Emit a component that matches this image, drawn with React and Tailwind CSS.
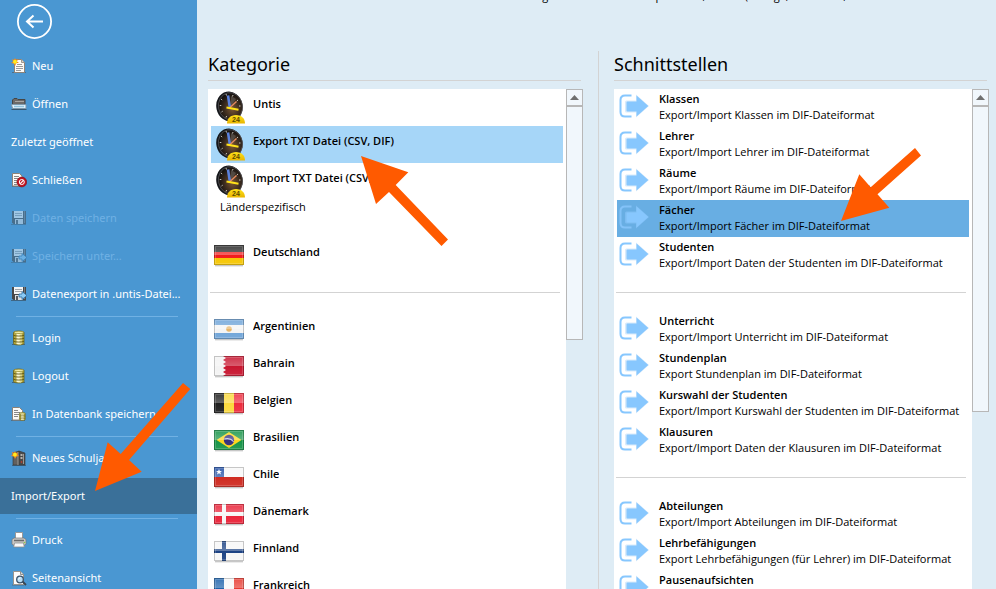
import React from "react";
import clsx from "clsx";

/* ---------- sidebar icons, 16 x 16 ---------- */

function Icon({ children, dim }) {
  return (
    <svg viewBox="0 0 16 16" className={clsx("size-4 shrink-0", dim && "opacity-50")} aria-hidden="true">
      {children}
    </svg>
  );
}

const IconNew = () => (
  <Icon>
    <path d="M1 14.500h14" stroke="#4b6f8c" />
    <path d="M3.500 1.500h7l3 3v10h-10z" fill="#fdfbf7" stroke="#8d8378" />
    <path d="M10.500 1.500v3h3" fill="#dcd6cc" stroke="#8d8378" strokeWidth=".8" />
    <path d="M6 6.500h5M5 8.500h7M5 10.500h7M5 12.500h5" stroke="#9b9b9b" />
    <path d="M4 0l1 2 2-1-1 2.500L8 5 5.500 5 4 8 3 5.500 0 5l2-1.500L1 1l2 1z" fill="#f28a1c" />
    <circle cx="4" cy="3.800" r="2" fill="#ffec1f" />
  </Icon>
);

const IconOpen = () => (
  <Icon>
    <path d="M.5 13.500h15" stroke="#37566e" />
    <path d="M1.500 12V4l1.500-1.500h3l1 1h7V12z" fill="#6c6a68" stroke="#454545" />
    <path d="M4 5.500h9" stroke="#a8a5a0" />
    <path d="M.5 8.500h14.500v4H1.500z" fill="#dff0fa" stroke="#7d98aa" />
    <path d="M3 10.500h10" stroke="#8fc3dc" strokeWidth="1.500" />
  </Icon>
);

const IconClose = () => (
  <Icon>
    <path d="M1 14.500h10" stroke="#4b6f8c" />
    <path d="M1.500 1.500h7l2.500 2.500v10h-9.500z" fill="#fdfbf7" stroke="#8d8378" />
    <path d="M3 4.500h5M3 6.500h5M3 8.500h3M3 10.500h3M3 12.500h3" stroke="#888" />
    <circle cx="10.800" cy="10" r="4.900" fill="#c31420" stroke="#7f0c14" strokeWidth=".6" />
    <circle cx="10.800" cy="10" r="2.500" fill="none" stroke="#fff" strokeWidth="1" />
    <path d="M9 11.800l3.600-3.600" stroke="#fff" strokeWidth="1.200" />
  </Icon>
);

const Disk = () => (
  <>
    <path d="M0 14.500h15" stroke="#3f6684" />
    <path d="M1 1h14v13H2.500L1 12.500z" fill="#464749" />
    <path d="M3 1h9v7H3z" fill="#f4f5f6" />
    <path d="M4 3.500h7M4 5.500h7" stroke="#a3a7ab" />
    <path d="M4 9h8v5H4z" fill="#dcdfe2" />
    <path d="M5 10h2v4H5z" fill="#55585c" />
    <path d="M13.500 1v12" stroke="#74777a" />
  </>
);

const IconSave = () => (
  <Icon dim>
    <Disk />
  </Icon>
);

const IconSaveAs = ({ dim }) => (
  <Icon dim={dim}>
    <Disk />
    <path d="M8 8h3V5.500L16 9.500 11 13.500V11H8z" fill="#8ccaf4" stroke="#2c6da3" strokeWidth=".8" />
  </Icon>
);

const Barrel = () => (
  <>
    <path d="M2.500 2.500C2.500.6 13 .6 13 2.500v11c0 1.900-10.500 1.900-10.500 0z" fill="#b3a63d" stroke="#6c6418" strokeWidth=".8" />
    <path d="M5.500 3.500c1.500.5 3.500.5 5 0v10.500c-1.500.5-3.500.5-5 0z" fill="#fbf8d2" />
    <path d="M9.500 4v10.500" stroke="#e3dc92" strokeWidth="1.500" />
    <path d="M2.500 5.300c2 1 8.500 1 10.500 0M2.500 8.300c2 1 8.500 1 10.500 0M2.500 11.300c2 1 8.500 1 10.500 0" fill="none" stroke="#5e5718" strokeWidth=".9" />
    <ellipse cx="7.800" cy="2.400" rx="4.600" ry="1.100" fill="#f3eea8" stroke="#817823" strokeWidth=".5" />
  </>
);

const IconDb = () => (
  <Icon>
    <path d="M1 14.500h13" stroke="#3f6684" />
    <Barrel />
  </Icon>
);

const IconSaveDb = () => (
  <Icon>
    <path d="M0 14.500h14" stroke="#4b6f8c" />
    <path d="M1.500 1.500h7l3 3v9.500h-10z" fill="#fdfbf7" stroke="#8d8378" />
    <path d="M3 4.500h4M3 6.500h6M3 8.500h5M3 10.500h4" stroke="#888" />
    <svg x="7" y="6" width="9" height="9" viewBox="2 0 12 16">
      <Barrel />
    </svg>
  </Icon>
);

const IconYear = () => (
  <Icon>
    <path d="M1 15.500h14" stroke="#3f6684" />
    <path d="M2 3l6-2v14H2z" fill="#62605e" stroke="#333" strokeWidth=".6" />
    <path d="M8 1l6 2v12H8z" fill="#4b4a49" stroke="#333" strokeWidth=".6" />
    <path d="M7 2v13M12.500 4v10" stroke="#9b9894" />
    <path d="M9.500 5h2M9.500 8h2" stroke="#d8d5cf" strokeWidth="1.500" />
    <path d="M4 1l1 2 2-.5-.5 2L8 6 5.500 6.500 4 9 3 6.500 0 6l1.500-1.500L1 2l2 .7z" fill="#f28a1c" />
    <circle cx="3.900" cy="4.700" r="1.900" fill="#ffec1f" />
    <circle cx="10.500" cy="12" r=".8" fill="#e33c25" />
  </Icon>
);

const IconPrint = () => (
  <Icon>
    <path d="M4.500.5h7v6h-7z" fill="#fff" stroke="#999" />
    <path d="M1 7.500L3 6h10l2 1.500V12l-1 1H2l-1-1z" fill="#c9c8c5" stroke="#777" strokeWidth=".7" />
    <path d="M3 8.500h10" stroke="#6b6b6b" strokeWidth="1.500" />
    <path d="M3.500 11h9l.8 4H2.700z" fill="#fafafa" stroke="#8d8d8d" strokeWidth=".8" />
    <circle cx="13.500" cy="10.500" r=".8" fill="#8bd045" />
  </Icon>
);

const IconPreview = () => (
  <Icon>
    <path d="M1 15h12" stroke="#4b6f8c" />
    <path d="M2.500 1.500h7l3 3v10h-10z" fill="#fdfdfd" stroke="#9a948c" />
    <path d="M9.500 1.500v3h3" fill="#ddd" stroke="#777" strokeWidth=".8" />
    <path d="M11.500 11.500l3.500 3.500" stroke="#3c4650" strokeWidth="1.800" />
    <circle cx="9" cy="9.500" r="3.300" fill="#b9def5" stroke="#39516a" strokeWidth="1.300" />
    <path d="M7.500 9.500a2 2 0 0 1 2-1.700" fill="none" stroke="#fff" />
  </Icon>
);

/* ---------- list icons ---------- */

const Clock = () => (
  <svg viewBox="0 0 29 33" className="h-[33px] w-[29px]" aria-hidden="true">
    <defs>
      <radialGradient id="face" cx=".55" cy=".6" r=".6">
        <stop offset="0" stopColor="#7a5632" />
        <stop offset=".55" stopColor="#3b2b1e" />
        <stop offset="1" stopColor="#0e0d0d" />
      </radialGradient>
      <linearGradient id="badge" x1="0" y1="0" x2="0" y2="1">
        <stop offset="0" stopColor="#ffe21a" />
        <stop offset="1" stopColor="#e9b500" />
      </linearGradient>
    </defs>
    <ellipse cx="13.500" cy="15.500" rx="13.200" ry="15" transform="rotate(-12 13.500 15.500)" fill="#15171b" />
    <ellipse cx="14.500" cy="15.500" rx="12" ry="13.800" transform="rotate(-12 14 15.500)" fill="url(#face)" stroke="#77757a" strokeWidth=".5" />
    <path d="M10 3l.5 1.500M5 8l1.200 1M3.800 14.500h1.500M5.500 21l1.200-.8M10 26.500l.6-1.500M17 4l-.5 1.500M22 9l-1.200 1M24.500 15h-1.500" stroke="#c9c5bd" strokeWidth="1" />
    <path d="M15 5l5 3-5 7z" fill="#5b5753" opacity=".7" />
    <path d="M12 4.500l1.800 11.500" stroke="#5b82de" strokeWidth="2.600" />
    <path d="M13.500 17l7-6.500" stroke="#e58b62" strokeWidth="1.400" />
    <path d="M10.500 16.500l12 2.300" stroke="#ffe21a" strokeWidth="2" />
    <path d="M11 32.500c0-5 3.500-8.500 9-8.500s9 3.500 9 8.500z" fill="url(#badge)" />
    <text x="20" y="31" textAnchor="middle" fontSize="7" fontWeight="700" fill="#5b4b00" fontFamily="Liberation Sans, Arial, sans-serif">
      24
    </text>
  </svg>
);

const flagArt = {
  de: (
    <>
      <path fill="#2b2b2b" d="M0 0h30v7H0z" />
      <path fill="#f11b1b" d="M0 7h30v6H0z" />
      <path fill="#f6c600" d="M0 13h30v7H0z" />
    </>
  ),
  ar: (
    <>
      <path fill="#6fa4d8" d="M0 0h30v20H0z" />
      <path fill="#f4f4f4" d="M0 6h30v8H0z" />
      <circle cx="15" cy="10" r="2.800" fill="#e8b568" />
    </>
  ),
  bh: (
    <>
      <path fill="#c8152f" d="M0 0h30v20H0z" />
      <path fill="#f3f3f3" d="M0 0h9l3 2-3 2 3 2-3 2 3 2-3 2 3 2-3 2 3 2-3 2H0z" />
    </>
  ),
  be: (
    <>
      <path fill="#1e1e1e" d="M0 0h10v20H0z" />
      <path fill="#fbd93c" d="M10 0h10v20H10z" />
      <path fill="#ee2b3d" d="M20 0h10v20H20z" />
    </>
  ),
  br: (
    <>
      <path fill="#159447" d="M0 0h30v20H0z" />
      <path fill="#fbd51d" d="M15 2l12.500 8L15 18 2.500 10z" />
      <circle cx="15" cy="10" r="5.200" fill="#352f7e" />
      <path d="M10.300 9c3-1 7 0 9.400 2.600" fill="none" stroke="#c9cbe8" strokeWidth="1.200" />
    </>
  ),
  cl: (
    <>
      <path fill="#f7f7f7" d="M0 0h30v10H0z" />
      <path fill="#cf2a20" d="M0 10h30v10H0z" />
      <path fill="#1f4da4" d="M0 0h10v10H0z" />
      <path fill="#fff" d="M5 2l.8 2h2.200L6.300 5.300 7 7.500 5 6.200 3 7.500l.7-2.200L2 4h2.200z" />
    </>
  ),
  dk: (
    <>
      <path fill="#ea2137" d="M0 0h30v20H0z" />
      <path fill="#f6f6f6" d="M8 0h4v20H8zM0 8h30v4H0z" />
    </>
  ),
  fi: (
    <>
      <path fill="#f7f7f7" d="M0 0h30v20H0z" />
      <path fill="#1c4284" d="M8 0h4v20H8zM0 8h30v4H0z" />
    </>
  ),
  fr: (
    <>
      <path fill="#1d62ab" d="M0 0h10v20H0z" />
      <path fill="#f7f7f7" d="M10 0h10v20H10z" />
      <path fill="#e8392f" d="M20 0h10v20H20z" />
    </>
  ),
};

function Flag({ code }) {
  return (
    <svg viewBox="0 0 30 22" className="h-[22px] w-[30px]" aria-hidden="true">
      <defs>
        <linearGradient id="gloss" x1="0" y1="0" x2="0" y2="1">
          <stop offset="0" stopColor="#fff" stopOpacity=".12" />
          <stop offset=".48" stopColor="#fff" stopOpacity=".3" />
          <stop offset=".5" stopColor="#fff" stopOpacity="0" />
          <stop offset="1" stopColor="#fff" stopOpacity=".08" />
        </linearGradient>
      </defs>
      <path d="M1 20.500h28" stroke="#000" strokeOpacity=".22" />
      <path d="M1 21.500h28" stroke="#000" strokeOpacity=".08" />
      {flagArt[code]}
      <path fill="url(#gloss)" d="M0 0h30v20H0z" />
      <rect x=".5" y=".5" width="29" height="19" fill="none" stroke="#000" strokeOpacity=".2" />
      <rect x="1.500" y="1.500" width="27" height="17" fill="none" stroke="#fff" strokeOpacity=".18" />
    </svg>
  );
}

const ExportArrow = ({ selected }) => (
  <svg viewBox="0 0 30 24" className="h-6 w-[30px]" aria-hidden="true">
    <path
      d="M12.500 1.500H6Q1.500 1.500 1.500 6v12q0 4.500 4.500 4.500h6.500"
      fill="none"
      stroke={selected ? "#83c2f8" : "#87c7fe"}
      strokeWidth="2"
    />
    <path
      d="M7.500 6.500h9.500V.5L30 12 17 23.500v-5H7.500q-1.500 0-1.500-1.500V8q0-1.500 1.500-1.500z"
      fill={selected ? "#7dbcf1" : "#d9ebfb"}
    />
    <path d="M8.500 7.500h9V1.500L29.300 12 17.500 22.500v-5H8.500q-1 0-1-1v-8q0-1 1-1z" fill="#87c7fe" />
  </svg>
);

/* ---------- data ---------- */

const menu = [
  { label: "Neu", icon: <IconNew /> },
  { label: "Öffnen", icon: <IconOpen /> },
  { label: "Zuletzt geöffnet" },
  { label: "Schließen", icon: <IconClose /> },
  { label: "Daten speichern", icon: <IconSave />, disabled: true },
  { label: "Speichern unter...", icon: <IconSaveAs dim />, disabled: true },
  { label: "Datenexport in .untis-Datei...", icon: <IconSaveAs /> },
  null,
  { label: "Login", icon: <IconDb /> },
  { label: "Logout", icon: <IconDb /> },
  { label: "In Datenbank speichern", icon: <IconSaveDb /> },
  null,
  { label: "Neues Schuljahr", icon: <IconYear /> },
  { label: "Import/Export", active: true },
  null,
  { label: "Druck", icon: <IconPrint /> },
  { label: "Seitenansicht", icon: <IconPreview /> },
];

const categories = [
  { title: "Untis", clock: true },
  { title: "Export TXT Datei (CSV, DIF)", clock: true, selected: true },
  { title: "Import TXT Datei (CSV, DIF)", clock: true },
  { group: "Länderspezifisch" },
  { title: "Deutschland", flag: "de" },
  null,
  { title: "Argentinien", flag: "ar" },
  { title: "Bahrain", flag: "bh" },
  { title: "Belgien", flag: "be" },
  { title: "Brasilien", flag: "br" },
  { title: "Chile", flag: "cl" },
  { title: "Dänemark", flag: "dk" },
  { title: "Finnland", flag: "fi" },
  { title: "Frankreich", flag: "fr" },
];

const interfaces = [
  { title: "Klassen", text: "Export/Import Klassen im DIF-Dateiformat" },
  { title: "Lehrer", text: "Export/Import Lehrer im DIF-Dateiformat" },
  { title: "Räume", text: "Export/Import Räume im DIF-Dateiformat" },
  { title: "Fächer", text: "Export/Import Fächer im DIF-Dateiformat", selected: true },
  { title: "Studenten", text: "Export/Import Daten der Studenten im DIF-Dateiformat" },
  null,
  { title: "Unterricht", text: "Export/Import Unterricht im DIF-Dateiformat" },
  { title: "Stundenplan", text: "Export Stundenplan im DIF-Dateiformat" },
  { title: "Kurswahl der Studenten", text: "Export/Import Kurswahl der Studenten im DIF-Dateiformat" },
  { title: "Klausuren", text: "Export/Import Daten der Klausuren im DIF-Dateiformat" },
  null,
  { title: "Abteilungen", text: "Export/Import Abteilungen im DIF-Dateiformat" },
  { title: "Lehrbefähigungen", text: "Export Lehrbefähigungen (für Lehrer) im DIF-Dateiformat" },
  { title: "Pausenaufsichten", text: "Export/Import Pausenaufsichten im DIF-Dateiformat" },
];

/* ---------- layout parts ---------- */

function Sidebar() {
  return (
    <nav className="w-[197px] shrink-0 bg-[#4a97d2] font-['Noto_Sans','Open_Sans',sans-serif] text-white">
      <div className="h-[47px] pt-1 pl-4">
        <button type="button" aria-label="Zurück" className="block size-9">
          <svg viewBox="0 0 36 36" className="size-9" fill="none" stroke="#fff" strokeWidth="1.800">
            <circle cx="18.500" cy="17.500" r="16.600" />
            <path d="M27 17.500H11M17.500 11.500l-6.500 6 6.500 6" strokeWidth="2" />
          </svg>
        </button>
      </div>
      <ul>
        {menu.map((item, i) =>
          item ? (
            <li key={i} className="py-px">
              <button
                type="button"
                disabled={item.disabled}
                className={clsx(
                  "flex h-9 w-full items-center gap-[5px] pl-[11px] text-left whitespace-nowrap",
                  item.active && "bg-[#3a7099]",
                  item.disabled && "text-[#70b1e4]"
                )}
              >
                {item.icon}
                {item.label}
              </button>
            </li>
          ) : (
            <li key={i} role="separator" className="h-1.5 pt-[3px] pr-[19px] pl-4">
              <div className="h-px bg-[#70b1e4]" />
            </li>
          )
        )}
      </ul>
    </nav>
  );
}

function Scrollbar({ thumb }) {
  return (
    <div className="w-[17px] shrink-0">
      <button
        type="button"
        aria-label="Nach oben"
        className="flex h-[17px] w-full items-center justify-center border border-[#b7b7b7] bg-[#f1f7fc]"
      >
        <svg viewBox="0 0 9 5" className="h-[5px] w-[9px]" aria-hidden="true">
          <path d="M4.500 0L9 5H0z" fill="#6f6f6f" />
        </svg>
      </button>
      <div className={clsx("border border-[#b7b7b7] bg-[#f1f7fc]", thumb)} />
    </div>
  );
}

function Panel({ title, thumb, children }) {
  return (
    <section className="flex min-w-0 flex-1 flex-col">
      <h2 className="mr-[2px] h-[30px] border-b border-[#d3d3d3] font-['Noto_Sans','Open_Sans',sans-serif] text-lg leading-[27px]">
        {title}
      </h2>
      <div className="flex min-h-0 flex-1 pt-2">
        <ul className="min-w-0 flex-1 overflow-hidden bg-white">{children}</ul>
        <Scrollbar thumb={thumb} />
      </div>
    </section>
  );
}

const Rule = () => (
  <li role="separator" className="h-[37px] pt-[18px] pr-1.5 pl-0.5">
    <div className="h-px bg-[#d3d3d3]" />
  </li>
);

function CategoryRow({ item }) {
  if (item.group) return <li className="h-[37px] pl-3 leading-[14px]">{item.group}</li>;
  return (
    <li className="px-[3px]">
      <button
        type="button"
        className={clsx("flex h-[37px] w-full text-left", item.selected && "bg-[#a6d6f8]")}
      >
        <span className={clsx("w-[42px] shrink-0", item.clock ? "pt-0.5 pl-[5px]" : "pt-2 pl-[3px]")}>
          {item.clock ? <Clock /> : <Flag code={item.flag} />}
        </span>
        <span className="truncate pt-[7px] leading-4 font-semibold">{item.title}</span>
      </button>
    </li>
  );
}

function InterfaceRow({ item }) {
  return (
    <li className="px-[3px]">
      <button
        type="button"
        className={clsx("flex h-[37px] w-full text-left", item.selected && "bg-[#68aee3]")}
      >
        <span className="w-[42px] shrink-0 pt-[5px] pl-0.5">
          <ExportArrow selected={item.selected} />
        </span>
        <span className="min-w-0 flex-1 pt-0.5 leading-4 whitespace-nowrap">
          <span className="block font-semibold">{item.title}</span>
          <span className="block">{item.text}</span>
        </span>
      </button>
    </li>
  );
}

/* Hand-placed pointers lying over the window */
const Pointers = () => (
  <svg
    viewBox="0 0 996 589"
    className="pointer-events-none absolute top-0 left-0 h-[589px] w-[996px]"
    fill="#ff5a00"
    aria-hidden="true"
  >
    <path d="M95 491L107.700 442.300 120.700 454 183 383 190.300 389 129 460 141.700 471.700z" />
    <path d="M361 156L408.300 172.300 395.700 185 448 239.500 441.500 246 389 192 376 204z" />
    <path d="M841 221L859.300 174.300 870.700 187.300 915 148 921 155.500 877.500 194.300 889.300 207.700z" />
  </svg>
);

export default function App() {
  return (
    <div className="relative flex h-screen overflow-hidden bg-[#deecf5] font-['Open_Sans','Noto_Sans',sans-serif] text-[11px] text-black">
      <Sidebar />
      <main className="flex min-w-0 flex-1 flex-col pr-[7px] pl-[11px]">
        <div className="flex h-[51px] flex-col items-end pr-[104px]">
          <p className="-mt-3 leading-[15px] whitespace-nowrap">
            Verwaltung von den Schuldaten per Untis, Lehrer (Abzüge, Klausuren, Räume
          </p>
        </div>
        <div className="flex min-h-0 flex-1">
          <Panel title="Kategorie" thumb="h-[234px]">
            {categories.map((item, i) => (item ? <CategoryRow key={i} item={item} /> : <Rule key={i} />))}
          </Panel>
          <div className="mr-[15px] ml-[15px] w-px bg-[#d3d3d3]" />
          <Panel title="Schnittstellen" thumb="h-[306px]">
            {interfaces.map((item, i) => (item ? <InterfaceRow key={i} item={item} /> : <Rule key={i} />))}
          </Panel>
        </div>
      </main>
      <Pointers />
    </div>
  );
}
